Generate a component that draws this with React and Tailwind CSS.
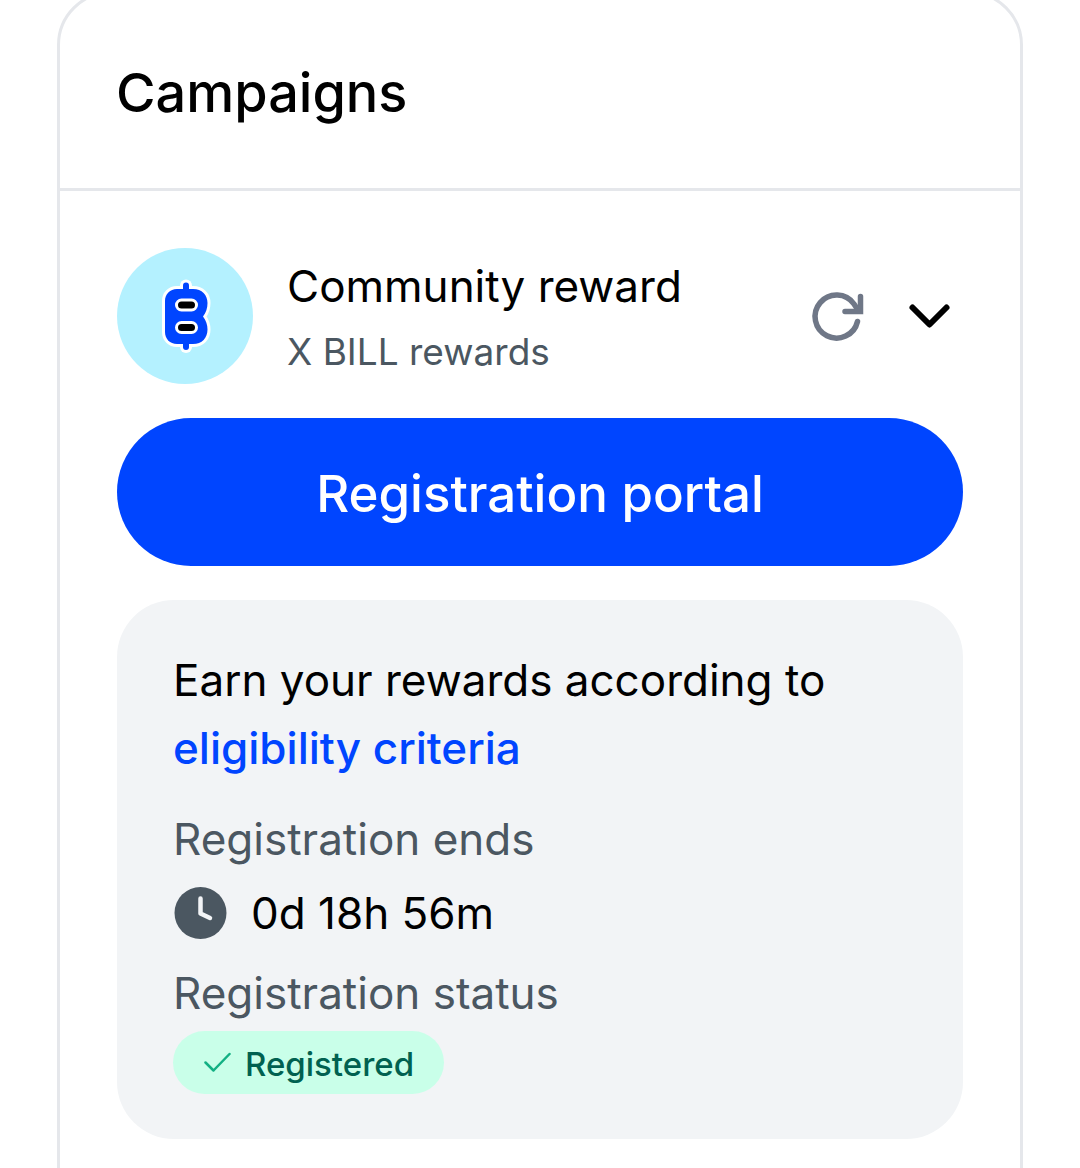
function CoinLogo() {
  return (
    <svg viewBox="0 0 136 136" className="size-[136px] shrink-0" aria-hidden="true">
      <circle cx="68" cy="68" r="68" fill="#b4f1ff" />
      {/* white halo first, blue letter on top */}
      <path d="M69 37.500V99" stroke="#fff" strokeWidth="12" strokeLinecap="round" />
      <path
        d="M60 41H76C85 41 90.500 47 90.500 55C90.500 60.500 89 64.500 86 68.500C89 72.500 90.500 76.500 90.500 81.500C90.500 90 85 96 76 96H60C53 96 48 91 48 84V53C48 46 53 41 60 41Z"
        fill="#0045ff"
        stroke="#fff"
        strokeWidth="6"
        strokeLinejoin="round"
      />
      <path d="M69 37.500V99" stroke="#0045ff" strokeWidth="6" strokeLinecap="round" />
      <path
        d="M60 41H76C85 41 90.500 47 90.500 55C90.500 60.500 89 64.500 86 68.500C89 72.500 90.500 76.500 90.500 81.500C90.500 90 85 96 76 96H60C53 96 48 91 48 84V53C48 46 53 41 60 41Z"
        fill="#0045ff"
      />
      <rect x="59.500" y="52" width="20" height="10" rx="5" fill="#000" stroke="#fff" strokeWidth="3" />
      <rect x="59.500" y="74.500" width="20" height="10" rx="5" fill="#000" stroke="#fff" strokeWidth="3" />
    </svg>
  );
}

function RefreshIcon() {
  return (
    <svg
      viewBox="0 0 68 68"
      className="size-[68px]"
      fill="none"
      stroke="#6f7787"
      strokeWidth="5.500"
      strokeLinecap="round"
      aria-hidden="true"
    >
      <path d="M54.500 39.500A21.500 21.500 0 1 1 51 22L55 28" />
      <path d="M57.500 14.500V29.500H42" />
    </svg>
  );
}

function ChevronIcon() {
  return (
    <svg
      viewBox="0 0 68 68"
      className="size-[68px]"
      fill="none"
      stroke="#000"
      strokeWidth="6"
      strokeLinecap="round"
      strokeLinejoin="round"
      aria-hidden="true"
    >
      <path d="M17.500 25.500L34.500 42.500L51.500 25.500" />
    </svg>
  );
}

function ClockIcon() {
  return (
    <svg viewBox="0 0 54 52" className="h-[52px] w-[54px] shrink-0" fill="none" aria-hidden="true">
      <circle cx="27.500" cy="26" r="26" fill="#4b5761" />
      <path
        d="M27.500 11.500V26.500L37 31"
        stroke="#f2f4f6"
        strokeWidth="4.500"
        strokeLinecap="round"
        strokeLinejoin="round"
      />
    </svg>
  );
}

function CheckIcon() {
  return (
    <svg
      viewBox="0 0 28 28"
      className="size-7 shrink-0"
      fill="none"
      stroke="#12b083"
      strokeWidth="2.500"
      strokeLinecap="round"
      strokeLinejoin="round"
      aria-hidden="true"
    >
      <path d="M2.500 11.500L10.500 19.500L26.500 3" />
    </svg>
  );
}

function RewardHeader() {
  return (
    <div className="flex items-center">
      <CoinLogo />
      <div className="ml-[34px] flex-1 pt-1">
        <h2 className="text-[44px] leading-[68px]">Community reward</h2>
        <p className="text-[37px] leading-[64px] text-[#4b5761]">X BILL rewards</p>
      </div>
      <div className="flex gap-6">
        <button type="button" aria-label="Refresh">
          <RefreshIcon />
        </button>
        <button type="button" aria-label="Toggle details">
          <ChevronIcon />
        </button>
      </div>
    </div>
  );
}

function RewardDetails() {
  return (
    <div className="mt-[34px] rounded-[57px] bg-[#f2f4f6] px-14 pt-[46px] pb-[45px] text-[44px] leading-[68px]">
      <p>
        Earn your rewards according to
        <br />
        <a href="#criteria" className="font-medium text-[#0045ff]">
          eligibility criteria
        </a>
      </p>
      <dl className="mt-[23px]">
        <dt className="text-[#4b5761]">Registration ends</dt>
        <dd className="mt-[6px] flex items-center gap-6">
          <ClockIcon />
          0d 18h 56m
        </dd>
        <dt className="mt-3 text-[#4b5761]">Registration status</dt>
        <dd className="mt-1 flex">
          <span className="flex items-center gap-[14px] rounded-full bg-[#c9ffe9] px-[30px] pt-1 text-[33px] leading-[59px] font-medium text-[#006150]">
            <CheckIcon />
            Registered
          </span>
        </dd>
      </dl>
    </div>
  );
}

function App() {
  return (
    <div className="h-screen overflow-hidden bg-white px-[57px] font-['Inter',sans-serif] text-black">
      {/* the card is scrolled slightly past the top edge */}
      <main className="-mt-[9px] rounded-[54px] border-[3px] border-[#e5e7eb] pb-[57px]">
        <header className="border-b-[3px] border-[#e5e7eb] px-14 pt-[59px] pb-[55px]">
          <h1 className="text-[54px] leading-[80px] font-medium">Campaigns</h1>
        </header>
        <section className="p-[57px]">
          <RewardHeader />
          <button
            type="button"
            className="mt-[34px] h-[148px] w-full rounded-full bg-[#0045ff] pt-1 text-[51px] font-medium text-white"
          >
            Registration portal
          </button>
          <RewardDetails />
        </section>
      </main>
    </div>
  );
}

export default App;
